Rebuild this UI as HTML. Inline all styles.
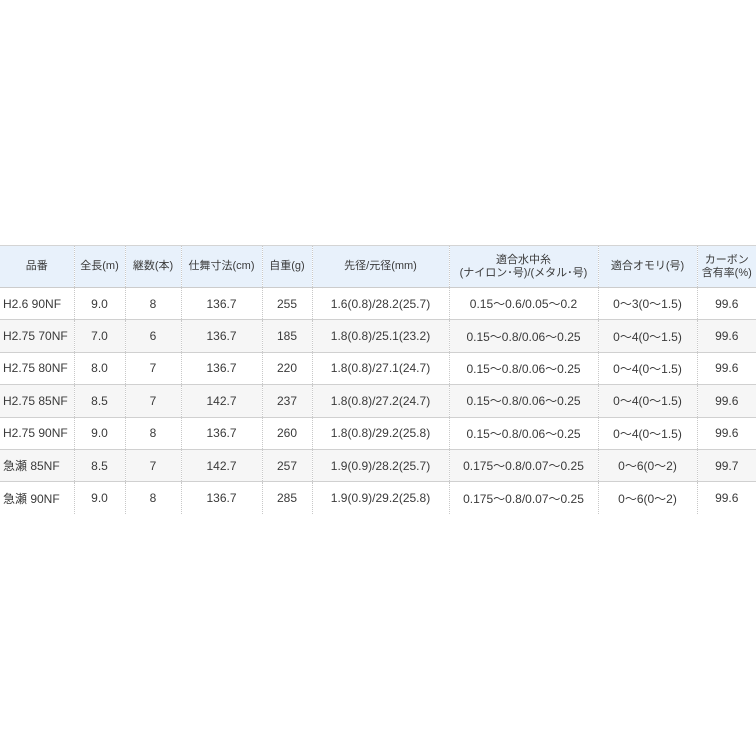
<!DOCTYPE html>
<html><head><meta charset="utf-8"><style>
body{margin:0;width:756px;height:756px;background:#fff;overflow:hidden;font-family:"Liberation Sans","Noto Sans CJK JP",sans-serif;}
table{position:absolute;left:0;top:245px;border-collapse:collapse;table-layout:fixed;width:756px;}
td,th{border-left:1px dotted #c8c8c8;text-align:center;font-size:11.5px;color:#3a3a3a;font-weight:normal;padding:0;white-space:nowrap;overflow:hidden}
td:first-child,th:first-child{border-left:none}
th{height:41px;background:#e8f1fb;border-top:1px solid #d4d4d4;border-bottom:1px solid #ccc;font-size:11px;line-height:13px}
td{height:31.4px;border-bottom:1px solid #d0d0d0;font-size:12px}
tr.g td{background:#f6f6f6}
tr:last-child td{border-bottom:none}
td.l{text-align:left;padding-left:3px}
</style></head><body>
<table>
<colgroup><col style="width:74px"><col style="width:51px"><col style="width:56px"><col style="width:81px"><col style="width:50px"><col style="width:137px"><col style="width:149px"><col style="width:99px"><col style="width:59px"></colgroup>
<tr><th>品番</th><th>全長(m)</th><th>継数(本)</th><th>仕舞寸法(cm)</th><th>自重(g)</th><th>先径/元径(mm)</th><th>適合水中糸<br>(ナイロン･号)/(メタル･号)</th><th>適合オモリ(号)</th><th>カーボン<br>含有率(%)</th></tr>
<tr><td class="l">H2.6 90NF</td><td>9.0</td><td>8</td><td>136.7</td><td>255</td><td>1.6(0.8)/28.2(25.7)</td><td>0.15～0.6/0.05～0.2</td><td>0～3(0～1.5)</td><td>99.6</td></tr>
<tr class="g"><td class="l">H2.75 70NF</td><td>7.0</td><td>6</td><td>136.7</td><td>185</td><td>1.8(0.8)/25.1(23.2)</td><td>0.15～0.8/0.06～0.25</td><td>0～4(0～1.5)</td><td>99.6</td></tr>
<tr><td class="l">H2.75 80NF</td><td>8.0</td><td>7</td><td>136.7</td><td>220</td><td>1.8(0.8)/27.1(24.7)</td><td>0.15～0.8/0.06～0.25</td><td>0～4(0～1.5)</td><td>99.6</td></tr>
<tr class="g"><td class="l">H2.75 85NF</td><td>8.5</td><td>7</td><td>142.7</td><td>237</td><td>1.8(0.8)/27.2(24.7)</td><td>0.15～0.8/0.06～0.25</td><td>0～4(0～1.5)</td><td>99.6</td></tr>
<tr><td class="l">H2.75 90NF</td><td>9.0</td><td>8</td><td>136.7</td><td>260</td><td>1.8(0.8)/29.2(25.8)</td><td>0.15～0.8/0.06～0.25</td><td>0～4(0～1.5)</td><td>99.6</td></tr>
<tr class="g"><td class="l">急瀬 85NF</td><td>8.5</td><td>7</td><td>142.7</td><td>257</td><td>1.9(0.9)/28.2(25.7)</td><td>0.175～0.8/0.07～0.25</td><td>0～6(0～2)</td><td>99.7</td></tr>
<tr><td class="l">急瀬 90NF</td><td>9.0</td><td>8</td><td>136.7</td><td>285</td><td>1.9(0.9)/29.2(25.8)</td><td>0.175～0.8/0.07～0.25</td><td>0～6(0～2)</td><td>99.6</td></tr>
</table>
</body></html>
